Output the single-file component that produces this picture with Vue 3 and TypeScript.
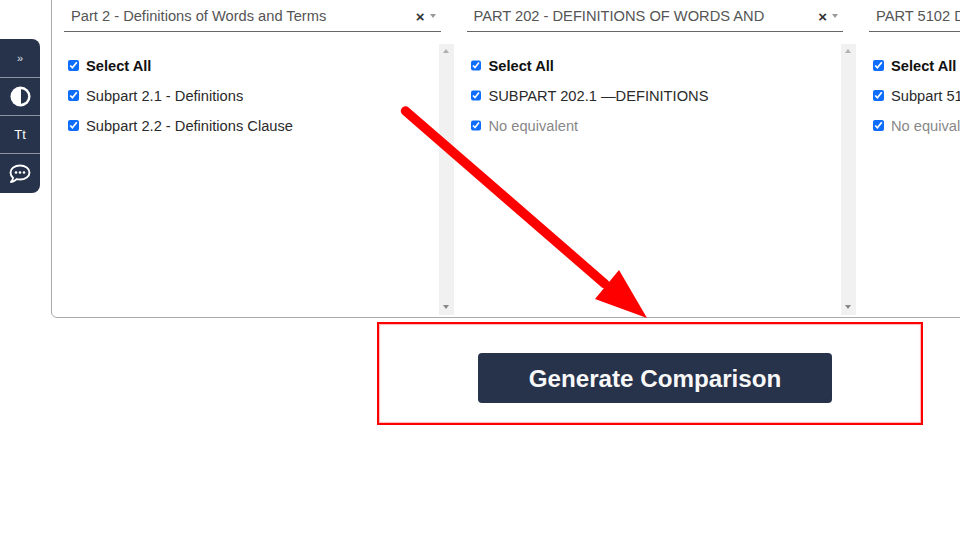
<script setup lang="ts">
interface Item { label: string; muted?: boolean; bold?: boolean }
interface Col { title: string; items: Item[]; clear: boolean }
const cols: Col[] = [
  { title: 'Part 2 - Definitions of Words and Terms', clear: true, items: [
    { label: 'Select All', bold: true },
    { label: 'Subpart 2.1 - Definitions' },
    { label: 'Subpart 2.2 - Definitions Clause' },
  ] },
  { title: 'PART 202 - DEFINITIONS OF WORDS AND', clear: true, items: [
    { label: 'Select All', bold: true },
    { label: 'SUBPART 202.1 —DEFINITIONS' },
    { label: 'No equivalent', muted: true },
  ] },
  { title: 'PART 5102 DEFINITIONS OF WORDS AND', clear: true, items: [
    { label: 'Select All', bold: true },
    { label: 'Subpart 5102.1 - Definitions' },
    { label: 'No equivalent', muted: true },
  ] },
]
</script>

<template>
  <div class="page">
    <aside class="rail">
      <div class="rail-btn chev">»</div>
      <div class="rail-btn">
        <svg width="21" height="21" viewBox="0 0 22 22">
          <circle cx="11" cy="11" r="10.500" fill="#fff" />
          <path d="M11.500 3.500a7.500 7.500 0 0 1 0 15z" fill="#27324b" />
        </svg>
      </div>
      <div class="rail-btn tt">Tt</div>
      <div class="rail-btn">
        <svg width="22" height="20" viewBox="0 0 22 20" fill="none">
          <path d="M11 1.500c5.300 0 9.500 3.100 9.500 7s-4.200 7-9.500 7c-1.200 0-2.300-.15-3.300-.45C6.400 16.400 4.400 17.600 2 18c1-1 1.900-2.600 2-4.300C2.500 12.400 1.500 10.600 1.500 8.500c0-3.900 4.200-7 9.500-7z" stroke="#fff" stroke-width="1.900" stroke-linejoin="round" />
          <circle cx="7" cy="8.500" r="1.300" fill="#fff" />
          <circle cx="11" cy="8.500" r="1.300" fill="#fff" />
          <circle cx="15" cy="8.500" r="1.300" fill="#fff" />
        </svg>
      </div>
    </aside>

    <section class="panel">
      <div v-for="col in cols" :key="col.title" class="col">
        <div class="select">
          <span class="select-text">{{ col.title }}</span>
          <span class="clear">×</span>
          <span class="caret"></span>
        </div>
        <div class="list">
          <div class="items">
            <label v-for="item in col.items" :key="item.label" class="item" :class="{ bold: item.bold, muted: item.muted }">
              <input type="checkbox" checked />
              <span>{{ item.label }}</span>
            </label>
          </div>
          <div class="scrollbar">
            <span class="arrow-up"></span>
            <span class="arrow-down"></span>
          </div>
        </div>
      </div>
    </section>

    <div class="actions">
      <button class="generate" type="button">Generate Comparison</button>
    </div>

    <div class="callout"></div>
    <svg class="pointer" width="260" height="230" viewBox="0 0 260 230">
      <path d="M5.500 7 L205 180" stroke="#ff0000" stroke-width="9.500" stroke-linecap="round" fill="none" />
      <path d="M219 166 L247 214 L195 195 Z" fill="#ff0000" />
    </svg>
  </div>
</template>

<style>
html, body { margin: 0; background: #fff; }
</style>

<style scoped>
.page {
  position: relative;
  width: 960px;
  height: 540px;
  overflow: hidden;
  background: #fff;
  font-family: "Liberation Sans", Arial, sans-serif;
  color: #1a1a1a;
}
.rail {
  position: absolute;
  left: 0;
  top: 39px;
  width: 40px;
  height: 154px;
  display: flex;
  flex-direction: column;
  background: #27324b;
  border-radius: 0 8px 8px 0;
  overflow: hidden;
}
.rail-btn {
  flex: 0 0 38px;
  box-sizing: border-box;
  display: flex;
  align-items: center;
  justify-content: center;
  color: #fff;
  border-bottom: 1px solid #8c94a3;
}
.rail-btn:first-child { flex-basis: 39px; }
.rail-btn:last-child { border-bottom: 0; flex: 1; }
.chev { font-size: 11px; color: #dfe2e8; }
.tt { font-size: 13px; }
.panel {
  display: flex;
  gap: 26px;
  box-sizing: border-box;
  width: 1100px;
  height: 329px;
  margin: -11px 0 0 51px;
  padding: 11px 0 0 12px;
  border: 1px solid #aaa;
  border-radius: 6px;
}
.col { flex: 0 0 376.500px; }
.select {
  display: flex;
  align-items: center;
  height: 31px;
  box-sizing: border-box;
  padding: 0 5px 0 7px;
  border-bottom: 1px solid #666;
  font-size: 14.670px;
  color: #555;
}
.select-text { flex: 1; white-space: nowrap; overflow: hidden; }
.clear { font-size: 15px; font-weight: 700; color: #333; margin-right: 5px; }
.caret {
  width: 0;
  height: 0;
  border-left: 3.500px solid transparent;
  border-right: 3.500px solid transparent;
  border-top: 4px solid #999;
}
.list {
  display: flex;
  height: 271px;
  margin-top: 12px;
}
.items {
  flex: 1;
  display: flex;
  flex-direction: column;
  gap: 8px;
  padding: 11px 0 0 4px;
}
.item {
  display: flex;
  align-items: center;
  height: 22px;
  font-size: 14.670px;
  color: #2a2a2a;
}
.item input {
  width: 10.500px;
  height: 10.500px;
  margin: 0 7.500px 1px 0;
  accent-color: #0d6efd;
}
.item.bold { font-weight: 700; color: #111; }
.item.muted { color: #888; }
.scrollbar {
  position: relative;
  width: 15px;
  margin-right: -13px;
  background: #f1f1f1;
}
.arrow-up, .arrow-down {
  position: absolute;
  left: 4px;
  width: 0;
  height: 0;
  border-left: 3.500px solid transparent;
  border-right: 3.500px solid transparent;
}
.arrow-up { top: 5px; border-bottom: 4px solid #b0b0b0; }
.arrow-down { bottom: 6px; border-top: 4px solid #888; }
.actions {
  display: flex;
  margin: 35px 0 0 478px;
}
.generate {
  width: 354px;
  height: 50px;
  padding: 1px 0 0;
  background: #27324b;
  color: #f8f8f8;
  border: 0;
  border-radius: 4px;
  font-family: inherit;
  font-size: 24.200px;
  font-weight: 700;
}
.callout {
  position: absolute;
  left: 377px;
  top: 322px;
  width: 546px;
  height: 103px;
  box-sizing: border-box;
  border: 2px solid #ff0000;
  box-shadow: inset 0 0 1px 1px rgba(255, 90, 90, 0.45);
}
.pointer {
  position: absolute;
  left: 400px;
  top: 104px;
}
</style>
